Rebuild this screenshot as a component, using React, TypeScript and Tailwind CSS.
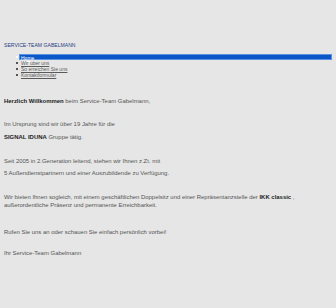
import React from "react";

export default function App() {
  const navItems = ["Wir über uns", "So erreichen Sie uns", "Kontaktformular"];
  return (
    <div
      className="min-h-[308px] w-[336px] bg-[#e6e6e6] text-[#555555]"
      style={{ fontFamily: '"Liberation Sans", Arial, sans-serif' }}
    >
      <div className="h-[42px]" />
      <div className="pl-[4px] h-[6px] leading-[6px] text-[5.1px] text-[#2a3c84]">
        SERVICE-TEAM GABELMANN
      </div>
      <ul className="mt-[6px] pl-[16px] pr-[4px] text-[5px]">
        <li className="flex items-center h-[6px]">
          <span className="w-[2px] h-[2px] rounded-full bg-white mr-[1px]" />
          <span className="flex-1 h-[6.5px] leading-[6.5px] bg-[#0a57c8] border border-[#5b8fe0] pl-[1px] text-white underline">
            Home
          </span>
        </li>
        {navItems.map((t) => (
          <li key={t} className="flex items-center h-[6px] leading-[6px]">
            <span className="w-[2px] h-[2px] rounded-full bg-[#222] mr-[1px]" />
            <span className="pl-[2px] underline text-[#5a5a5a]">{t}</span>
          </li>
        ))}
      </ul>
      <div className="pl-[4px] text-[5.95px] leading-[8px]">
        <div className="mt-[19px]">
          <b className="text-[#222]">Herzlich Willkommen</b> beim Service-Team Gabelmann,
        </div>
        <div className="mt-[15px]">Im Ursprung sind wir über 19 Jahre für die</div>
        <div className="mt-[5px]">
          <b className="text-[#222]">SIGNAL IDUNA</b> Gruppe tätig.
        </div>
        <div className="mt-[16px]">Seit 2005 in 2.Generation leitend, stehen wir Ihnen z.Zt. mit</div>
        <div className="mt-[4px]">5 Außendienstpartnern und einer Auszubildende zu Verfügung.</div>
        <div className="mt-[16px]">
          Wir bieten Ihnen sogleich, mit einem geschäftlichen Doppelsitz und einer Repräsentanzstelle der{" "}
          <b className="text-[#222]">IKK classic</b> ,
        </div>
        <div>außerordentliche Präsenz und permanente Erreichbarkeit.</div>
        <div className="mt-[19px]">Rufen Sie uns an oder schauen Sie einfach persönlich vorbei!</div>
        <div className="mt-[13px]">Ihr Service-Team Gabelmann</div>
      </div>
    </div>
  );
}
